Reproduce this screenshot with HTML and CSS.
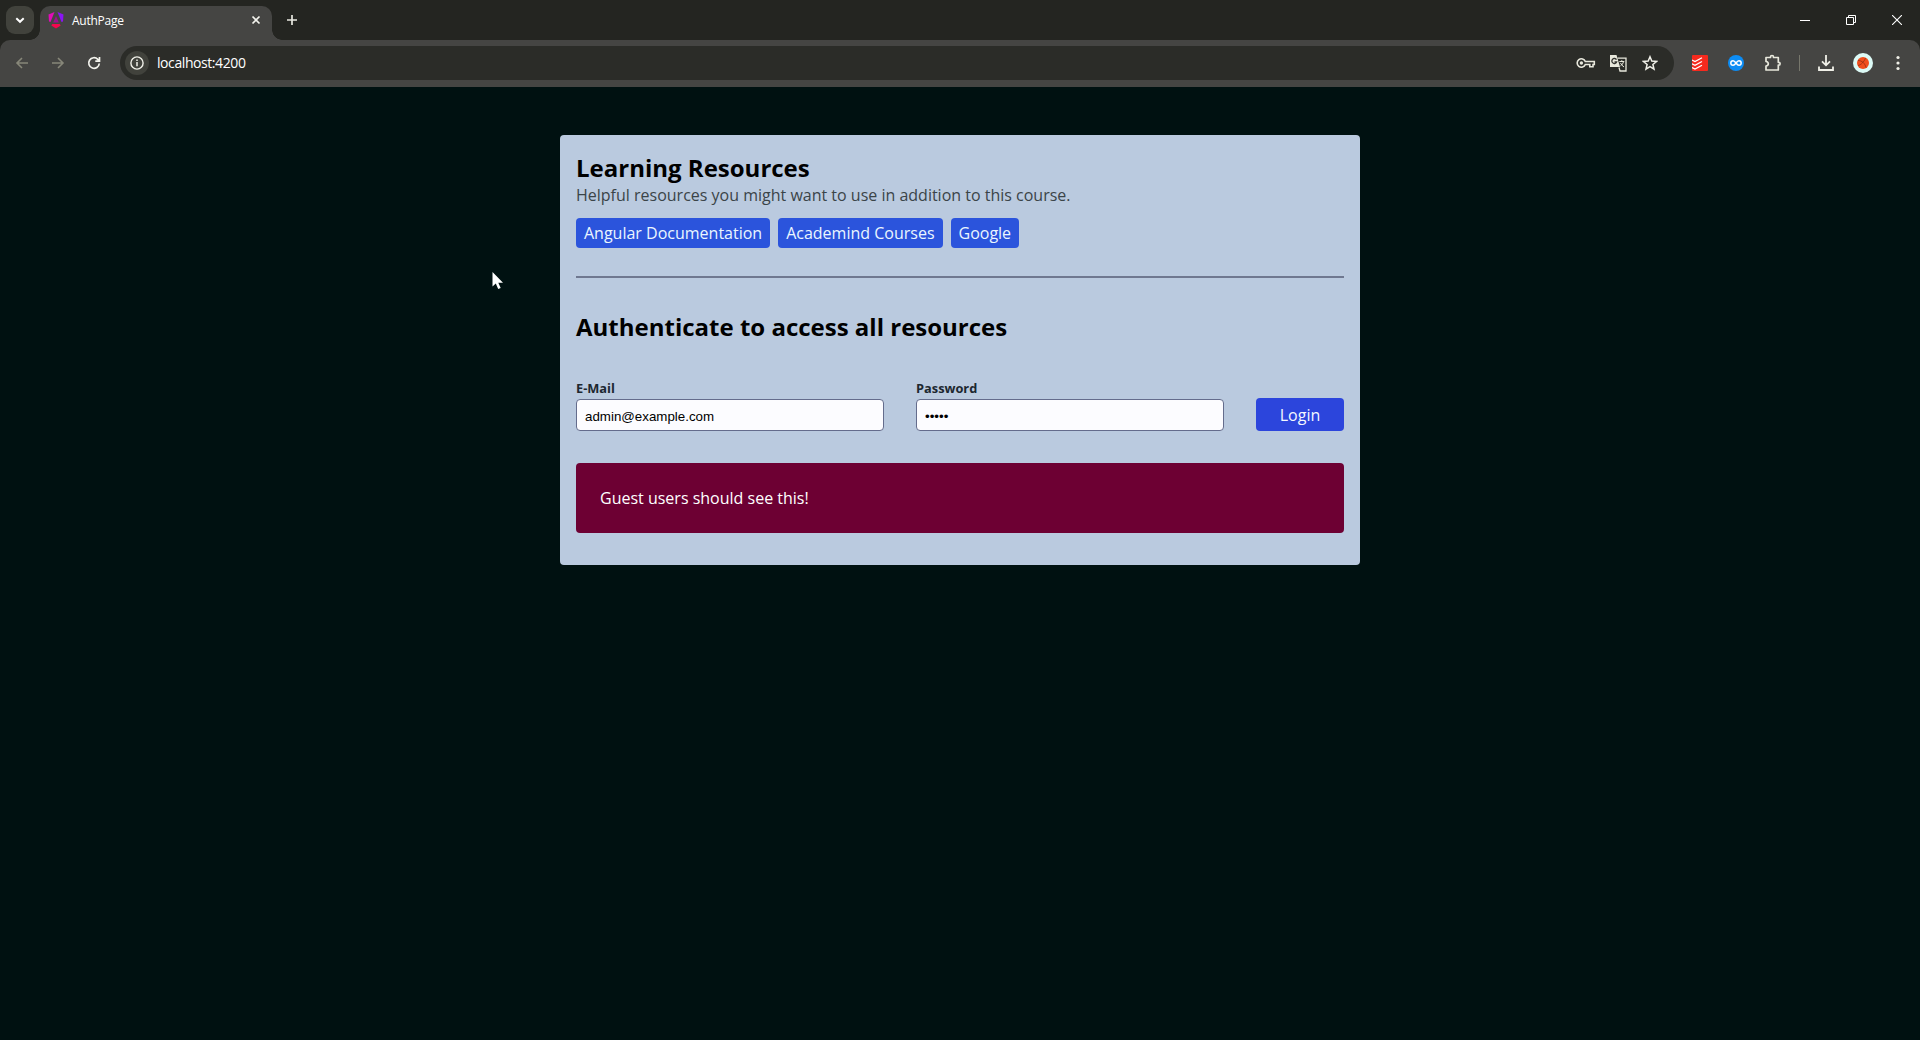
FILE: index.html
```html
<!DOCTYPE html>
<html lang="en">
<head>
<meta charset="utf-8">
<title>AuthPage</title>
<link rel="stylesheet" href="styles.css">
</head>
<body>
<header class="browser">
  <div class="tabstrip">
    <span class="tab-search"><svg width="28" height="28" viewBox="0 0 28 28"><path d="M10.3 12.3l3.7 3.5 3.7-3.5" fill="none" stroke="#fff" stroke-width="2"/></svg></span>
    <div class="tab">
      <svg class="favicon" width="16" height="17" viewBox="0 0 16 17">
        <path d="M.5 2.500L6.500 0 2.500 10 1 9.500z" fill="#e10cb8"/><path d="M9.500 0L15.500 2.500 15 9.500 13.500 10z" fill="#8a14f5"/>
        <path d="M8 4l2.800 6.500H5.200z" fill="#a01090"/><path d="M4.300 12h7.400l1 1.500L8 16.500l-4.700-3z" fill="#f5064e"/>
      </svg>
      <span class="tab-title">AuthPage</span>
      <svg class="tab-close" width="16" height="16" viewBox="0 0 16 16"><path d="M4.500 4.500l7 7m0-7l-7 7" stroke="#f4f4ee" stroke-width="1.700"/></svg>
    </div>
    <svg class="new-tab" width="16" height="16" viewBox="0 0 16 16"><path d="M8 3v10M3 8h10" stroke="#e8e8e0" stroke-width="1.700"/></svg>
    <div class="window-buttons">
      <svg width="10" height="10" viewBox="0 0 10 10"><path d="M0 5.500h10" stroke="#fff"/></svg>
      <svg width="10" height="10" viewBox="0 0 10 10"><path d="M.5 2.500h7v7h-7zM2.500 2.500v-2h7v7h-2" fill="none" stroke="#fff"/></svg>
      <svg width="10" height="10" viewBox="0 0 10 10"><path d="M0 0l10 10M10 0L0 10" stroke="#fff" stroke-width="1.100"/></svg>
    </div>
  </div>
  <div class="toolbar">
    <div class="nav">
      <svg width="16" height="16" viewBox="0 0 16 16"><path d="M14 8H3M8 3L3 8l5 5" fill="none" stroke="#878779" stroke-width="1.600"/></svg>
      <svg width="16" height="16" viewBox="0 0 16 16"><path d="M2 8h11M8 3l5 5-5 5" fill="none" stroke="#878779" stroke-width="1.600"/></svg>
      <svg width="16" height="16" viewBox="0 0 16 16"><path d="M13.300 8.500A5.300 5.300 0 1 1 11.800 4.300L13 5.700M13.500 2v4.200H9.300" fill="none" stroke="#f4f4ee" stroke-width="1.700"/></svg>
    </div>
    <div class="omnibox">
      <span class="site-info"><svg width="16" height="16" viewBox="0 0 16 16"><circle cx="8" cy="8" r="6.100" fill="none" stroke="#f0f0e8" stroke-width="1.400"/><path d="M8 7v4.200M8 4.500V6" stroke="#f0f0e8" stroke-width="1.500"/></svg></span>
      <span class="url">localhost:4200</span>
      <div class="omni-icons">
        <svg width="20" height="16" viewBox="0 0 20 16"><path d="M9.300 6.500h9v3h-1.300v2.300h-3.200V9.500H9.300A4.200 4.200 0 1 1 9.300 6.500z" fill="none" stroke="#e8e8dc" stroke-width="1.600"/><circle cx="5.400" cy="8" r="1.700" fill="#e8e8dc"/></svg>
        <svg width="18" height="18" viewBox="0 0 18 18"><path d="M1 1h6.500l3.500 12H1z" fill="#e8e8dc"/><path d="M8.500 4.200H17V17h-6l-1-3.500" fill="none" stroke="#e8e8dc" stroke-width="1.300"/><path d="M7.500 5.700A2.500 2.500 0 1 0 7.700 7.800H5.500" fill="none" stroke="#33332f" stroke-width="1.300"/><path d="M10.300 7.500h5M12.800 6.200v1.300M14.500 7.500c-.3 2-1.500 3.500-3 4.300M11.500 9c.7 1.600 2 3 3.500 4" fill="none" stroke="#e8e8dc"/></svg>
        <svg width="16" height="16" viewBox="0 0 16 16"><path d="M8 1.800l1.800 4.300 4.700.4-3.600 3 1.100 4.600L8 11.600l-4 2.500 1.100-4.600-3.600-3 4.700-.4z" fill="none" stroke="#f0f0e8" stroke-width="1.500"/></svg>
      </div>
    </div>
    <div class="extensions">
      <svg width="16" height="16" viewBox="0 0 16 16"><rect width="16" height="16" rx="1" fill="#f52a1e"/><path d="M0 5l3 1.500 7-3.800M0 8.800l3 1.500 7-3.800M0 12.600l3 1.500 7-3.800" fill="none" stroke="#fff" stroke-width="1.300"/></svg>
      <svg width="16" height="16" viewBox="0 0 16 16"><circle cx="8" cy="8" r="8" fill="#0c8cf4"/><path d="M8 8C6.900 6.500 6.300 5.700 5.100 5.700a2.300 2.300 0 0 0 0 4.600C6.300 10.300 6.900 9.500 8 8s1.700-2.300 2.900-2.300a2.300 2.300 0 0 1 0 4.600C9.700 10.300 9.100 9.500 8 8z" fill="none" stroke="#fff" stroke-width="1.500"/></svg>
      <svg class="puzzle" width="18" height="18" viewBox="0 0 18 18"><path d="M2 3.500h4.500V3a1.500 1.500 0 0 1 3 0v.5h4.800v4.800h.4a1.400 1.400 0 0 1 0 2.800h-.4V16H2v-4c1.500-.2 2.300-1 2.300-2.200S3.500 7.700 2 7.500z" fill="none" stroke="#e8e8dc" stroke-width="1.700" stroke-linejoin="round"/></svg>
      <i class="divider"></i>
      <svg class="download" width="18" height="18" viewBox="0 0 18 18"><path d="M9 1v10M5 7.300l4 4 4-4M2 12.500V16h14v-3.500" fill="none" stroke="#f0f0e8" stroke-width="1.800"/></svg>
      <svg class="avatar" width="20" height="20" viewBox="0 0 20 20"><circle cx="10" cy="10" r="10" fill="#dcfaf6"/><circle cx="10" cy="10" r="6" fill="#f04e1c"/><path d="M5 7.500c4 0 7 3 8 7M5 12.500C8 12 11 9 12.500 5" fill="none" stroke="#8a2a10" stroke-width=".7"/></svg>
      <svg class="more" width="16" height="16" viewBox="0 0 16 16"><circle cx="8" cy="2.500" r="1.600" fill="#f0f0e8"/><circle cx="8" cy="8" r="1.600" fill="#f0f0e8"/><circle cx="8" cy="13.500" r="1.600" fill="#f0f0e8"/></svg>
    </div>
  </div>
</header>
<main class="page">
  <div class="card">
    <section class="resources">
      <h2>Learning Resources</h2>
      <p>Helpful resources you might want to use in addition to this course.</p>
      <nav class="links"><a>Angular Documentation</a><a>Academind Courses</a><a>Google</a></nav>
    </section>
    <section class="auth">
      <h2>Authenticate to access all resources</h2>
      <form class="login">
        <label class="field"><span>E-Mail</span><input type="email" value="admin@example.com"></label>
        <label class="field"><span>Password</span><input type="password" value="admin"></label>
        <button type="button">Login</button>
      </form>
    </section>
    <p class="guest">Guest users should see this!</p>
  </div>
</main>
<svg class="cursor" width="13" height="18" viewBox="0 0 13 18"><path d="M.5 0v14.500l3.300-3 2.400 5.500 2.500-1-2.400-5.300H11z" fill="#fff"/></svg>
</body>
</html>
```
FILE: styles.css
```css
* { box-sizing: border-box; }
body { margin: 0; height: 1040px; overflow: hidden; display: flex; flex-direction: column; background: #001111; font-family: "Open Sans", "Noto Sans", sans-serif; }
svg { display: block; flex: none; }
h2, p { margin: 0; }

.browser { flex: none; background: #242521; color: #fff; }
.tabstrip { height: 40px; display: flex; align-items: flex-start; padding: 6px 18px 0 6px; }
.tab-search { width: 28px; height: 28px; border-radius: 9px; background: #41423c; }
.tab { position: relative; width: 232px; height: 34px; margin-left: 6px; padding: 0 8px 6px; display: flex; align-items: center; background: #454543; border-radius: 10px 10px 0 0; }
.tab::before, .tab::after { content: ""; position: absolute; bottom: 0; width: 10px; height: 10px; }
.tab::before { left: -10px; background: radial-gradient(circle at 0 0, transparent 9.5px, #454543 10px); }
.tab::after { right: -10px; background: radial-gradient(circle at 100% 0, transparent 9.5px, #454543 10px); }
.tab-title { margin-left: 8px; padding-top: 2px; font-size: 12px; line-height: 16px; letter-spacing: -.25px; }
.tab-close { margin-left: auto; }
.new-tab { margin: 6px 0 0 12px; }
.window-buttons { margin: 9px 0 0 auto; display: flex; gap: 36px; }
.toolbar { height: 47px; display: flex; align-items: center; padding: 0 14px 1px 0; background: #454543; border-radius: 10px 10px 0 0; }
.nav { flex: none; width: 120px; display: flex; gap: 20px; padding-left: 14px; }
.omnibox { flex: none; width: 1554px; height: 34px; display: flex; align-items: center; padding: 0 16px 0 5px; border-radius: 17px; background: #2b2c28; }
.site-info { width: 24px; height: 24px; display: grid; place-items: center; border-radius: 50%; background: #41423c; }
.url { margin-left: 8px; font-size: 14px; line-height: 20px; letter-spacing: -.42px; }
.omni-icons { margin-left: auto; display: flex; align-items: center; gap: 15px; }
.omni-icons svg:first-child { margin-right: -2px; }
.extensions { flex: 1; display: flex; align-items: center; gap: 20px; padding-left: 18px; }
.divider { width: 1px; height: 16px; margin: 0 -3px; background: #77776c; }
.avatar { margin: 0 -3px 0 -2px; }

.page { padding-top: 48px; }
.card { width: 800px; height: 430px; margin: 0 auto; padding: 16px; border-radius: 4px; background: #bacadf; }
h2 { font-size: 24px; line-height: 33px; color: #000; }
.resources { height: 127px; border-bottom: 2px solid #6f7890; }
.resources p { font-size: 16px; line-height: 22px; color: #3a4448; }
.links { display: flex; gap: 8px; margin-top: 12px; }
.links a { height: 30px; padding: 0 8px; border-radius: 4px; background: #2b54dc; color: #eaf6ff; font-size: 16px; line-height: 30px; }
.auth { padding-top: 32px; }
.login { display: flex; align-items: flex-end; gap: 32px; margin-top: 34px; height: 54px; }
.field { width: 308px; }
.field span { display: block; font-size: 12.8px; line-height: 17px; font-weight: 700; color: #1c2730; margin-bottom: 2px; }
.field input { display: block; width: 100%; height: 32px; padding: 3px 8px 0; border: 1px solid #646c8c; border-radius: 4px; background: #fcfcff; color: #000; font: 13.333px "Liberation Sans", Arial, sans-serif; }
.login button { width: 88px; height: 33px; padding: 0; border: 0; border-radius: 4px; background: #2c45dc; color: #f4f8ff; font: 16px "Open Sans", "Noto Sans", sans-serif; }
.guest { height: 70px; margin-top: 32px; padding: 24px; border-radius: 4px; background: #6d0033; color: #fff; font-size: 16px; line-height: 22px; }
.cursor { position: absolute; left: 492px; top: 272px; }
```
